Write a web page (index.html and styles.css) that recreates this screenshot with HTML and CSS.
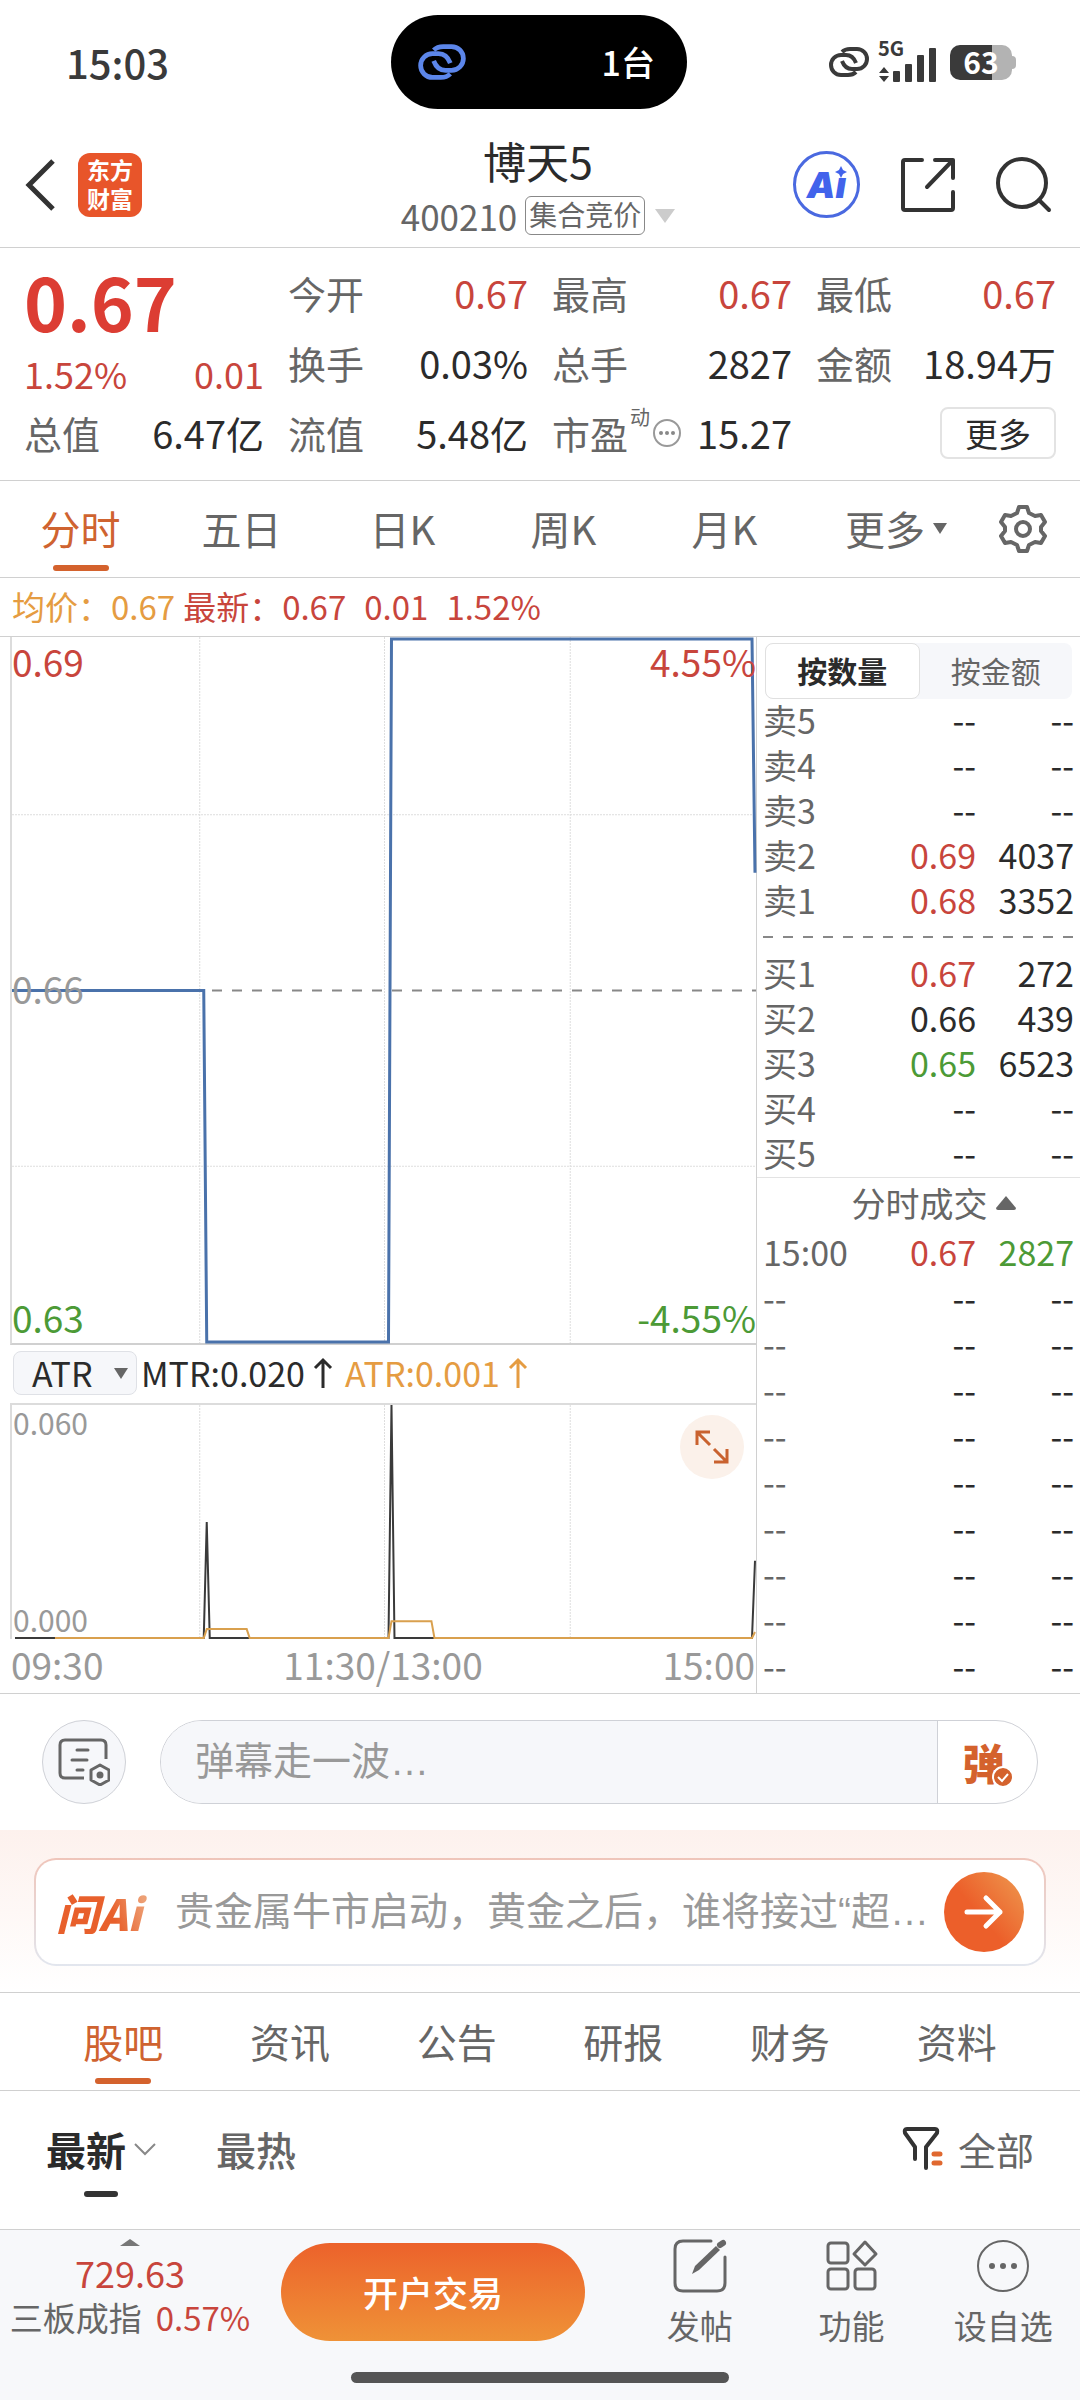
FILE: index.html
```html
<!DOCTYPE html>
<html lang="zh-CN">
<head>
<meta charset="utf-8">
<meta name="viewport" content="width=device-width, initial-scale=1">
<title>博天5 400210</title>
<link rel="stylesheet" href="styles.css">
</head>
<body>
<svg class="defs" aria-hidden="true">
  <symbol id="link" viewBox="0 0 42 32">
    <g fill="none" stroke="currentColor" stroke-width="4" stroke-linecap="butt">
      <path d="M14 6Q17 3 22 3h7a10 10 0 0 1 0 20h-5q-7 0-10-8"/>
      <path d="M28 26q-3 3-8 3h-7a10 10 0 0 1 0-20h5q7 0 10 8"/>
    </g>
  </symbol>
</svg>

<div class="status">
  <time class="clock">15:03</time>
  <div class="island">
    <svg class="island-link" width="50" height="38"><use href="#link"/></svg>
    <span>1台</span>
  </div>
  <div class="signals">
    <svg width="42" height="32"><use href="#link"/></svg>
    <div class="cell">
      <span class="cell-tag">5G</span>
      <svg width="58" height="40" viewBox="0 0 58 40" fill="currentColor">
        <path d="M1 31l5-6 5 6zM1 34h10l-5 6z"/>
        <rect x="15" y="29" width="7" height="11" rx="1"/><rect x="27" y="22" width="7" height="18" rx="1"/>
        <rect x="39" y="13" width="7" height="27" rx="1"/><rect x="51" y="6" width="7" height="34" rx="1"/>
      </svg>
    </div>
    <div class="battery"><span>63</span></div>
  </div>
</div>

<header class="topbar">
  <div class="side">
    <button class="plain" aria-label="返回"><svg width="32" height="52" viewBox="0 0 32 52" fill="none" stroke="#333" stroke-width="5"><path d="M29 2L5 26l24 24"/></svg></button>
    <a class="brand" href="#">东方<br>财富</a>
  </div>
  <div class="title">
    <h1>博天5</h1>
    <p><span>400210</span><span class="badge">集合竞价</span><i class="tri-down pale"></i></p>
  </div>
  <div class="side side-end">
    <button class="ai" aria-label="Ai"><span>Ai</span>
      <svg class="spark" width="16" height="13" viewBox="0 0 16 13"><path fill="#4263eb" d="M8 1l2 4 4 2-4 2-2 4-2-4-4-2 4-2z"/></svg>
    </button>
    <button class="plain" aria-label="分享"><svg width="56" height="56" viewBox="0 0 56 56" fill="none" stroke="#333" stroke-width="4" stroke-linecap="round" stroke-linejoin="round"><path d="M22 3H5q-2 0-2 2v46q0 2 2 2h46q2 0 2-2V35M35 3h18v18M53 3L27 30"/></svg></button>
    <button class="plain" aria-label="搜索"><svg width="56" height="56" viewBox="0 0 56 56" fill="none" stroke="#333" stroke-width="4" stroke-linecap="round"><circle cx="26" cy="26" r="24"/><path d="M43 43l10 10"/></svg></button>
  </div>
</header>

<section class="quote">
  <div class="main-quote">
    <strong>0.67</strong>
    <div class="change"><span>1.52%</span><span>0.01</span></div>
    <div class="stat"><span>总值</span><b>6.47亿</b></div>
  </div>
  <div class="col">
    <div class="stat"><span>今开</span><b class="up">0.67</b></div>
    <div class="stat"><span>换手</span><b>0.03%</b></div>
    <div class="stat"><span>流值</span><b>5.48亿</b></div>
  </div>
  <div class="col">
    <div class="stat"><span>最高</span><b class="up">0.67</b></div>
    <div class="stat"><span>总手</span><b>2827</b></div>
    <div class="stat"><span class="pe">市盈<sup>动</sup><svg width="30" height="30" viewBox="0 0 30 30"><circle cx="15" cy="15" r="13" fill="none" stroke="#999" stroke-width="2"/><g fill="#888"><circle cx="9" cy="15" r="2"/><circle cx="15" cy="15" r="2"/><circle cx="21" cy="15" r="2"/></g></svg></span><b>15.27</b></div>
  </div>
  <div class="col">
    <div class="stat"><span>最低</span><b class="up">0.67</b></div>
    <div class="stat"><span>金额</span><b>18.94万</b></div>
    <div class="stat end"><button class="more">更多</button></div>
  </div>
</section>

<nav class="tabs period">
  <a class="tab on" href="#">分时</a>
  <a class="tab" href="#">五日</a>
  <a class="tab" href="#">日K</a>
  <a class="tab" href="#">周K</a>
  <a class="tab" href="#">月K</a>
  <a class="tab wide" href="#">更多<i class="tri-down small"></i></a>
  <button class="plain gear" aria-label="设置"><svg width="50" height="50" viewBox="0 0 50 50" fill="none" stroke="#666" stroke-width="4" stroke-linejoin="round"><path d="M21 3h8l2 6 6 3 6-1 4 7-4 5v4l4 5-4 7-6-1-6 3-2 6h-8l-2-6-6-3-6 1-4-7 4-5v-4l-4-5 4-7 6 1 6-3z"/><circle cx="25" cy="25" r="7"/></svg></button>
</nav>

<div class="legend">
  <span class="avg">均价：</span><span class="avg">0.67</span>
  <span class="up key">最新：</span><span class="up">0.67</span><span class="up gap">0.01</span><span class="up gap">1.52%</span>
</div>

<main class="market">
  <div class="charts">
    <div class="plot price">
      <svg viewBox="0 0 745 707" preserveAspectRatio="none">
        <g class="grid"><path d="M188 0v707M373 0v707M559 0v707M0 178h745M0 530h745"/></g>
        <path class="mid" d="M0 354h745"/>
        <path class="avg-line" d="M0 354h192l3 352h182l3-704h361l3 234"/>
      </svg>
      <span class="lab tl up">0.69</span><span class="lab tr up">4.55%</span>
      <span class="lab ml">0.66</span>
      <span class="lab bl down">0.63</span><span class="lab br down">-4.55%</span>
    </div>
    <div class="indicator">
      <button class="picker">ATR<i class="tri-down small"></i></button>
      <span class="ind">MTR:0.020<svg width="20" height="32" viewBox="0 0 20 32"><path d="M10 31V3M2 11l8-8 8 8"/></svg></span>
      <span class="ind avg">ATR:0.001<svg width="20" height="32" viewBox="0 0 20 32"><path d="M10 31V3M2 11l8-8 8 8"/></svg></span>
    </div>
    <div class="plot atr">
      <svg viewBox="0 0 745 236" preserveAspectRatio="none">
        <g class="grid"><path d="M188 0v236M373 0v236M559 0v236"/></g>
        <path class="mtr-line" d="M3 235h189l3-117 3 117h179l3-235 3 235h358l3-78"/>
        <path class="atr-line" d="M43 235h149l3-9h40l3 9h139l3-17h40l3 17h318l3-6"/>
      </svg>
      <span class="lab2 top">0.060</span><span class="lab2 bottom">0.000</span>
      <button class="expand" aria-label="全屏"><svg width="34" height="34" viewBox="0 0 34 34" fill="none" stroke="#c9622f" stroke-width="3"><path d="M2 15V2h13M3 3l12 12M32 19v13H19M31 31L19 19"/></svg></button>
    </div>
    <div class="axis"><span>09:30</span><span>11:30/13:00</span><span>15:00</span></div>
  </div>

  <aside class="book">
    <div class="seg"><button class="on">按数量</button><button>按金额</button></div>
    <table class="levels">
      <tr><th>卖5</th><td>--</td><td>--</td></tr>
      <tr><th>卖4</th><td>--</td><td>--</td></tr>
      <tr><th>卖3</th><td>--</td><td>--</td></tr>
      <tr><th>卖2</th><td class="up">0.69</td><td>4037</td></tr>
      <tr><th>卖1</th><td class="up">0.68</td><td>3352</td></tr>
    </table>
    <svg class="split" height="28"><path d="M0 13h1000"/></svg>
    <table class="levels">
      <tr><th>买1</th><td class="up">0.67</td><td>272</td></tr>
      <tr><th>买2</th><td>0.66</td><td>439</td></tr>
      <tr><th>买3</th><td class="down">0.65</td><td>6523</td></tr>
      <tr><th>买4</th><td>--</td><td>--</td></tr>
      <tr><th>买5</th><td>--</td><td>--</td></tr>
    </table>
    <button class="ticks-title">分时成交<svg width="20" height="14" viewBox="0 0 20 14"><path d="M10 0l10 12q0 2-2 2H2q-2 0-2-2z" fill="#666"/></svg></button>
    <table class="ticks">
      <tr><th>15:00</th><td class="up">0.67</td><td class="down">2827</td></tr>
      <tr><th>--</th><td>--</td><td>--</td></tr>
      <tr><th>--</th><td>--</td><td>--</td></tr>
      <tr><th>--</th><td>--</td><td>--</td></tr>
      <tr><th>--</th><td>--</td><td>--</td></tr>
      <tr><th>--</th><td>--</td><td>--</td></tr>
      <tr><th>--</th><td>--</td><td>--</td></tr>
      <tr><th>--</th><td>--</td><td>--</td></tr>
      <tr><th>--</th><td>--</td><td>--</td></tr>
      <tr><th>--</th><td>--</td><td>--</td></tr>
    </table>
  </aside>
</main>

<form class="danmu">
  <button type="button" class="round" aria-label="弹幕设置"><svg width="52" height="48" viewBox="0 0 52 48" fill="none" stroke="#666" stroke-width="3" stroke-linecap="round" stroke-linejoin="round"><path d="M26 40H7q-5 0-5-5V7q0-5 5-5h36q5 0 5 5v14" stroke-linecap="butt"/><path d="M19 12h11M14 22h15M19 32h6"/><path d="M42 27l9 5v10l-9 5-9-5V32z"/><circle cx="42" cy="37" r="2" fill="#666"/></svg></button>
  <div class="pill">
    <input type="text" aria-label="弹幕" placeholder="弹幕走一波…">
    <button type="button" class="toggle" aria-label="弹幕开关">弹<svg class="tick" width="22" height="22" viewBox="0 0 22 22"><circle cx="11" cy="11" r="10" fill="#d4622d" stroke="#fff" stroke-width="2"/><path d="M6 11l4 4 6-7" fill="none" stroke="#fff" stroke-width="2"/></svg></button>
  </div>
</form>

<section class="ask">
  <form class="ask-card">
    <span class="ask-logo">问Ai</span>
    <input type="text" aria-label="问Ai" placeholder="贵金属牛市启动，黄金之后，谁将接过“超…">
    <button type="button" aria-label="提问"><svg width="40" height="36" viewBox="0 0 40 36" fill="none" stroke="#fff" stroke-width="5" stroke-linecap="round" stroke-linejoin="round"><path d="M3 18h33M22 4l14 14-14 14"/></svg></button>
  </form>
</section>

<nav class="tabs info">
  <a class="tab on" href="#">股吧</a>
  <a class="tab" href="#">资讯</a>
  <a class="tab" href="#">公告</a>
  <a class="tab" href="#">研报</a>
  <a class="tab" href="#">财务</a>
  <a class="tab" href="#">资料</a>
</nav>

<div class="sort">
  <button class="plain current">最新<svg width="22" height="14" viewBox="0 0 22 14" fill="none" stroke="#888" stroke-width="2"><path d="M1 2l10 10L21 2"/></svg></button>
  <button class="plain hot">最热</button>
  <button class="plain all"><svg width="42" height="44" viewBox="0 0 42 44" fill="none" stroke="#333" stroke-width="4" stroke-linejoin="round" stroke-linecap="round"><path d="M13 32V20L3 6q-1-4 2-4h28q3 0 2 4l-11 14v21"/><path d="M32 27h6M32 36h6" stroke="#e0682f" stroke-width="5"/></svg>全部</button>
</div>

<footer class="dock">
  <div class="dock-row">
    <a class="index" href="#">
      <i class="tri-up"></i>
      <span class="up">729.63</span>
      <span class="index-name">三板成指<em class="up">0.57%</em></span>
    </a>
    <button class="open">开户交易</button>
    <div class="actions">
      <a href="#"><svg width="54" height="54" viewBox="0 0 54 54" fill="none" stroke="#666" stroke-width="3" stroke-linecap="round"><path d="M38 2H10q-8 0-8 8v34q0 8 8 8h34q8 0 8-8V18"/><path d="M19 35l3-8 21-20 4 4-21 20z" fill="#666" stroke="none"/><path d="M47 6l3-2" stroke-width="6"/></svg>发帖</a>
      <a href="#"><svg width="54" height="54" viewBox="0 0 54 54" fill="none" stroke="#666" stroke-width="3"><rect x="3" y="4" width="20" height="20" rx="3"/><rect x="3" y="30" width="20" height="20" rx="3"/><rect x="30" y="30" width="20" height="20" rx="3"/><path stroke-linejoin="round" d="M40 3l11 12-11 11-11-11z"/></svg>功能</a>
      <a href="#"><svg width="54" height="54" viewBox="0 0 54 54" fill="none" stroke="#666" stroke-width="2"><circle cx="27" cy="27" r="25"/><g fill="#666" stroke="none"><circle cx="16" cy="27" r="3"/><circle cx="27" cy="27" r="3"/><circle cx="38" cy="27" r="3"/></g></svg>设自选</a>
    </div>
  </div>
  <div class="home"></div>
</footer>
</body>
</html>
```
FILE: styles.css
```css
* { box-sizing: border-box; }
body {
  margin: 0;
  background: #fff;
  color: #2b2b2b;
  font: 400 34px/44px "Noto Sans CJK SC", "Noto Sans", sans-serif;
}
h1, p { margin: 0; font-weight: 400; }
a { color: inherit; text-decoration: none; }
b, em { font-weight: 400; font-style: normal; }
button, input { font: inherit; color: inherit; border: 0; padding: 0; margin: 0; background: none; outline: 0; }
svg { display: block; flex: none; }
table { border-collapse: collapse; width: 100%; }
th { font-weight: 400; text-align: left; color: #666; padding: 0; }
td { text-align: right; padding: 0; }
.defs { position: absolute; width: 0; height: 0; }
.up { color: #c8453c; }
.down { color: #4c9a36; }
.avg { color: #e59c42; }
.plain { display: flex; align-items: center; }
.tri-down { border: 10px solid transparent; border-top: 14px solid #666; border-bottom: 0; }
.tri-down.pale { border-top-color: #ccc; }
.tri-down.small { border-width: 11px 7px 0; }

/* status bar */
.status { display: grid; grid-template-columns: 1fr 296px 1fr; align-items: center; height: 110px; padding: 14px 68px 0 66px; color: #3a3a3a; }
.clock { font-size: 40px; font-weight: 500; line-height: 40px; }
.island { display: flex; align-items: center; justify-content: space-between; height: 94px; padding: 0 32px 0 26px; border-radius: 47px; background: #000; color: #fff; font-weight: 500; }
.island-link { color: #5c86ea; }
.signals { display: flex; align-items: center; justify-content: flex-end; gap: 8px; }
.cell { position: relative; }
.cell-tag { position: absolute; left: 0; top: -4px; font: 700 20px/20px "Noto Sans CJK SC", sans-serif; }
.battery { position: relative; width: 62px; height: 35px; margin-left: 6px; border-radius: 10px; background: linear-gradient(90deg, #3a3a3a 68%, #b3b3b3 68%); color: #fff; font: 700 30px/33px "Noto Sans CJK SC", sans-serif; text-align: center; }
.battery::after { content: ""; position: absolute; right: -4px; top: 11px; width: 4px; height: 13px; border-radius: 0 4px 4px 0; background: #b3b3b3; }

/* header */
.topbar { display: grid; grid-template-columns: 1fr auto 1fr; align-items: center; height: 138px; padding: 12px 28px 0 24px; border-bottom: 1px solid #d0d0d0; }
.side { display: flex; align-items: center; gap: 22px; }
.side-end { justify-content: flex-end; gap: 40px; }
.brand { width: 64px; height: 64px; padding: 2px 0; border-radius: 12px; background: #e8552a; color: #fff; font-size: 23px; line-height: 29px; font-weight: 700; text-align: center; }
.title { text-align: center; }
.title h1 { font-size: 43px; line-height: 56px; }
.title p { display: flex; align-items: center; justify-content: center; gap: 8px; height: 44px; margin-top: 6px; color: #666; font-size: 35px; }
.badge { height: 39px; padding: 0 3px; border: 1px solid #888; border-radius: 6px; font-size: 28px; line-height: 35px; }
.title .tri-down { margin-left: 2px; }
.ai { position: relative; width: 67px; height: 67px; border: 3px solid #4a69e0; border-radius: 50%; color: #4263eb; font: italic 900 36px/60px Inter, sans-serif; }
.spark { position: absolute; right: 8px; top: 11px; background: #fff; }

/* quote */
.quote { display: grid; grid-template-columns: repeat(4, 1fr); gap: 24px; padding: 10px 24px 12px; border-bottom: 1px solid #d0d0d0; font-size: 38px; }
.stat { display: flex; align-items: center; justify-content: space-between; height: 70px; white-space: nowrap; }
.stat > span { color: #666; }
.end { justify-content: flex-end; }
.main-quote strong { display: block; height: 90px; color: #dc3d33; font-size: 73px; line-height: 84px; font-weight: 700; }
.change { display: flex; justify-content: space-between; height: 50px; color: #c8453c; font-size: 36px; line-height: 50px; }
.pe { display: flex; align-items: center; }
.pe sup { align-self: flex-start; font-size: 20px; line-height: 24px; margin: -6px 2px 0; }
.more { width: 116px; height: 52px; border: 2px solid #e3e3e3; border-radius: 8px; font-size: 33px; line-height: 44px; }

/* tabs */
.tabs { display: flex; height: 97px; border-bottom: 1px solid #d0d0d0; color: #666; font-size: 40px; }
.tab { display: flex; flex: 1; align-items: center; justify-content: center; padding-bottom: 2px; }
.tab.on { position: relative; color: #cf6330; }
.tab.on::after { content: ""; position: absolute; bottom: 6px; width: 56px; height: 6px; border-radius: 3px; background: #d4622d; }
.wide { justify-content: flex-end; gap: 8px; }
.wide .tri-down { margin-right: 19px; }
.gear { width: 114px; justify-content: center; }
.info { height: 99px; padding: 0 40px; border-top: 1px solid #d0d0d0; }

.legend { display: flex; align-items: center; height: 59px; padding: 0 12px 2px; border-bottom: 1px solid #d0d0d0; font-size: 33px; }
.legend .key { margin-left: 8px; }
.legend .gap { margin-left: 18px; }

/* charts */
.market { display: flex; border-bottom: 1px solid #d0d0d0; }
.charts { flex: 1; min-width: 0; padding-left: 10px; border-right: 1px solid #d0d0d0; }
.plot { position: relative; border-left: 2px solid #dcdcdc; }
.plot > svg { width: 100%; height: 100%; overflow: visible; }
.plot path { fill: none; vector-effect: non-scaling-stroke; }
.price { height: 708px; border-bottom: 2px solid #d0d0d0; }
.grid path { stroke: #dedede; stroke-width: 1; stroke-dasharray: 2 1; }
.mid { stroke: #888; stroke-width: 2; stroke-dasharray: 10 10; }
.avg-line { stroke: #4a72ab; stroke-width: 3; }
.mtr-line { stroke: #3a3a3a; stroke-width: 2; }
.atr-line { stroke: #d9a04e; stroke-width: 2; }
.lab { position: absolute; font-size: 37px; line-height: 44px; }
.tl { left: 0; top: 2px; }
.tr { right: 0; top: 2px; }
.ml { left: 0; top: 50%; margin-top: -24px; color: #999; }
.bl { left: 0; bottom: 4px; }
.br { right: 0; bottom: 4px; }
.indicator { display: flex; align-items: center; height: 58px; padding: 0 0 2px 3px; }
.picker { display: flex; align-items: center; justify-content: space-between; width: 124px; height: 44px; padding: 0 8px 0 18px; border: 1px solid #dfe1e6; border-radius: 8px; background: #f6f7fa; line-height: 40px; }
.ind { display: flex; align-items: center; gap: 8px; margin-left: 4px; }
.ind.avg { margin-left: 12px; }
.ind path { fill: none; stroke: currentColor; stroke-width: 3; }
.atr { height: 236px; border-top: 2px solid #dcdcdc; }
.lab2 { position: absolute; left: 1px; color: #999; font-size: 30px; line-height: 36px; }
.lab2.top { top: -1px; }
.lab2.bottom { bottom: 2px; }
.expand { position: absolute; right: 12px; top: 10px; display: flex; align-items: center; justify-content: center; width: 64px; height: 64px; border-radius: 50%; background: #fbf1ea; }
.axis { display: flex; justify-content: space-between; height: 54px; padding: 0 1px; color: #999; font-size: 37px; line-height: 50px; }

/* order book */
.book { width: 323px; padding-top: 6px; }
.seg { display: flex; margin: 0 8px; border-radius: 8px; background: #f6f7fa; font-size: 30px; }
.seg button { flex: 1; height: 56px; padding-bottom: 2px; color: #666; line-height: 50px; }
.seg .on { border: 1px solid #e0e0e0; border-radius: 8px; background: #fff; color: #2b2b2b; font-weight: 700; }
.levels, .ticks { width: 100%; table-layout: fixed; }
.levels td, .levels th { height: 45px; line-height: 42px; vertical-align: top; }
.levels th, .ticks th { width: 110px; padding-left: 6px; }
.levels td:last-child, .ticks td:last-child { width: 104px; padding-right: 6px; }
.split { width: 100%; padding: 0 6px; }
.split path { stroke: #888; stroke-width: 2; stroke-dasharray: 10 10; }
.ticks-title { display: flex; align-items: center; justify-content: center; gap: 8px; width: 100%; height: 54px; padding: 0 0 4px 30px; border-top: 1px solid #e3e3e3; color: #666; }
.ticks td, .ticks th { height: 46px; line-height: 42px; vertical-align: top; }

/* comment entry */
.danmu { display: flex; gap: 34px; padding: 26px 42px; }
.round { display: flex; align-items: center; justify-content: center; width: 84px; height: 84px; border: 1px solid #cfd1d7; border-radius: 50%; background: #f6f7fa; }
.pill { display: flex; flex: 1; border: 1px solid #cfd1d7; border-radius: 42px; overflow: hidden; }
.pill input { flex: 1; min-width: 0; padding-left: 34px; background: #f6f7fa; font-size: 39px; }
input { font-family: "Liberation Sans", "Noto Sans CJK SC", sans-serif; }
input::placeholder { color: #999; opacity: 1; }
.toggle { position: relative; width: 100px; padding-right: 8px; border-left: 1px solid #cfd1d7; color: #d4622d; font-size: 42px; font-weight: 900; line-height: 72px; }
.tick { position: absolute; right: 23px; bottom: 15px; }

.ask { padding: 28px 34px 26px; background: linear-gradient(#fdf1ed, #fff); }
.ask-card { display: flex; align-items: center; height: 108px; padding: 0 20px; border: 2px solid transparent; border-radius: 22px; background: linear-gradient(#fff, #fff) padding-box, linear-gradient(#efc5ba, #e2e6ee) border-box; }
.ask-logo { width: 119px; background: linear-gradient(70deg, #e8602c 60px, #eda075 94px); background-clip: text; -webkit-background-clip: text; color: transparent; font-size: 43px; font-style: italic; font-weight: 900; }
.ask-card input { flex: 1; min-width: 0; height: 60px; font-size: 39px; }
.ask-card button { display: flex; align-items: center; justify-content: center; width: 80px; height: 80px; border-radius: 50%; background: linear-gradient(50deg, #ec5f2a 45%, #ee9a50); }

/* posts filter */
.sort { display: flex; align-items: center; height: 138px; padding: 0 46px 22px; color: #666; font-size: 40px; }
.current { position: relative; gap: 8px; color: #2b2b2b; font-weight: 700; }
.current::after { content: ""; position: absolute; left: 38px; bottom: -26px; width: 34px; height: 6px; border-radius: 3px; background: #333; }
.hot { margin-left: 60px; font-weight: 500; }
.all { gap: 14px; margin-left: auto; font-size: 38px; }

/* bottom dock */
.dock { padding-bottom: 18px; border-top: 1px solid #d0d0d0; background: #f7f8fa; }
.dock-row { display: flex; height: 142px; padding: 9px 0 0 12px; }
.index { display: flex; flex-direction: column; align-items: center; width: 242px; padding-right: 6px; font-size: 36px; white-space: nowrap; }
.index-name { display: flex; gap: 14px; color: #666; font-size: 33px; line-height: 46px; }
.tri-up { border: 10px solid transparent; border-bottom: 7px solid #777; border-top: 0; margin-bottom: 4px; }
.open { width: 304px; height: 98px; margin: 4px 0 0 27px; border-radius: 49px; background: linear-gradient(#ec622b, #ef9237); color: #fff; font-size: 35px; font-weight: 500; line-height: 92px; }
.actions { display: flex; flex: 1; padding: 0 1px 0 39px; }
.actions a { display: flex; flex: 1; flex-direction: column; align-items: center; gap: 10px; color: #666; font-size: 33px; white-space: nowrap; }
.home { width: 378px; height: 11px; margin: 0 auto; border-radius: 6px; background: #555; }
```
